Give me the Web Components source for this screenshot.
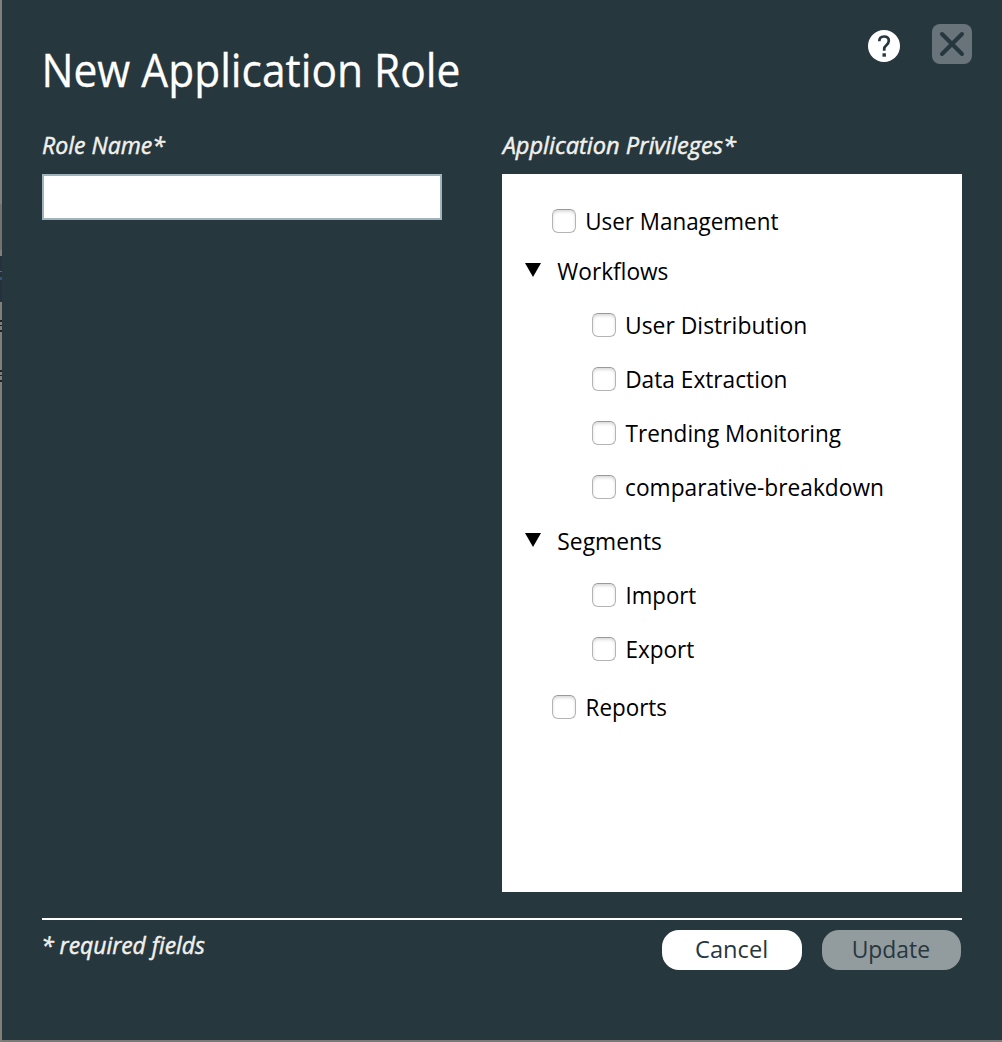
<!DOCTYPE html>
<html lang="en">
<head>
<meta charset="utf-8">
<title>New Application Role</title>
<style>
html,body{margin:0;height:100%;overflow:hidden;background:#7b7978}
body{font-family:"Open Sans","Noto Sans",sans-serif}
</style>
</head>
<body>
<role-dialog></role-dialog>
<script>
const shadow = (el, html) => { const r = el.attachShadow({mode:'open'}); r.innerHTML = html; return r; };
const pen = document.createElement('canvas').getContext('2d');

// One line of text whose glyphs run from "from" px after the box's left edge, "span" px wide.
customElements.define('fit-text', class extends HTMLElement {
  connectedCallback() {
    if (this.shadowRoot) return;
    const r = shadow(this, `<style>
      :host{display:block;white-space:nowrap;width:0}
      span{display:inline-block;transform-origin:0 50%}
    </style><span></span>`);
    const s = r.querySelector('span');
    s.textContent = this.getAttribute('text');
    const c = getComputedStyle(this);
    pen.font = `${c.fontStyle} ${c.fontWeight} ${c.fontSize} ${c.fontFamily}`;
    const m = pen.measureText(s.textContent);
    const k = this.getAttribute('span') / (m.actualBoundingBoxLeft + m.actualBoundingBoxRight);
    const x = +this.getAttribute('from') + m.actualBoundingBoxLeft * k;
    s.style.transform = `translateX(${x}px) scaleX(${k})`;
  }
});

customElements.define('help-icon', class extends HTMLElement {
  connectedCallback() {
    shadow(this, `<style>:host{display:block;width:32px;height:32px}svg{display:block}</style>
    <svg width="32" height="32" viewBox="0 0 32 32"><circle cx="16" cy="16" r="16" fill="#fff"/>
    <path d="M11.300 11.200C11.300 8 13.200 6.500 16 6.500c2.900 0 4.800 1.600 4.800 4.200 0 2.200-1.200 3.300-2.500 4.500C16.800 16.500 16.200 17.300 16.200 19v1.800" fill="none" stroke="#27373e" stroke-width="2.700"/>
    <rect x="14.500" y="23.300" width="3.400" height="3.400" fill="#27373e"/></svg>`);
  }
});

customElements.define('close-button', class extends HTMLElement {
  connectedCallback() {
    shadow(this, `<style>:host{display:block;width:40px;height:40px;border-radius:8px;background:#68737a}svg{display:block}</style>
    <svg width="40" height="40" viewBox="0 0 40 40"><path d="M10 10L30 30M30 10L10 30" stroke="#27373e" stroke-width="4" stroke-linecap="round"/></svg>`);
  }
});

customElements.define('check-row', class extends HTMLElement {
  connectedCallback() {
    shadow(this, `<style>
      :host{display:flex;align-items:center;height:54px;padding-left:50px}
      :host([nested]){padding-left:90px}
      i{box-sizing:border-box;width:24px;height:24px;border:1.5px solid #b4b4b4;border-top-color:#999;border-radius:6px;background:#fff;box-shadow:inset 0 2px 3px #00000024;flex:none}
    </style><i></i><slot></slot>`);
  }
});

customElements.define('tree-group', class extends HTMLElement {
  connectedCallback() {
    shadow(this, `<style>
      :host{display:block}
      header{display:flex;align-items:center;height:54px;padding-left:23px}
      :host([tight]) header{height:46px;padding-bottom:4px}
      svg{display:block;margin-top:-2px}
    </style><header><svg width="16" height="14" viewBox="0 0 16 14"><path d="M0 0H16L8 14Z"/></svg><slot name="label"></slot></header><slot></slot>`);
  }
});

customElements.define('pill-button', class extends HTMLElement {
  connectedCallback() {
    shadow(this, `<style>
      :host{box-sizing:border-box;display:flex;align-items:center;width:140px;height:40px;padding-bottom:2px;border-radius:17px;background:#fff;color:#27373e;line-height:38px}
      :host([disabled]){width:139px;background:#929b9e}
    </style><slot></slot>`);
  }
});

// Sliver of the page left visible beside the dialog.
customElements.define('page-edge', class extends HTMLElement {
  connectedCallback() {
    shadow(this, `<style>:host{display:block;width:2px;height:1042px;
      background:linear-gradient(#807f7d 204px,#73726f 204px 250px,#807f7d 250px 256px,#25323d 256px 271px,#6d665f 271px 272px,#25323d 272px 277px,#31567c 277px 280px,#25323d 280px 302px,#807f7a 302px 320px,#222 320px 322px,#807f7a 322px 325px,#222 325px 326px,#807f7a 326px 330px,#222 330px 332px,#807f7a 332px 370px,#222 370px 372px,#807f7a 372px 375px,#222 375px 376px,#807f7a 376px 380px,#222 380px 382px,#807f7a 382px)}</style>`);
  }
});

customElements.define('role-dialog', class extends HTMLElement {
  connectedCallback() {
    shadow(this, `<style>
      :host{display:flex;width:1002px;height:1042px;font-size:24.5px;line-height:34px;color:#000}
      main{box-sizing:border-box;width:1000px;height:1040px;background:#27373e;padding:24px 40px 0;display:flex;flex-direction:column}
      .top{display:flex;height:104px}
      .title{flex:1;font-size:46px;line-height:64px;padding-top:13px;color:#fff;-webkit-text-stroke:.3px #fff}
      help-icon{margin:6px 32px 0 0}
      close-button{margin-right:-10px}
      .cols{display:flex;gap:60px;height:764px}
      .left{width:400px}
      .right{width:460px}
      .label{height:46px;font-style:italic;line-height:34px;color:#f1f1ec;-webkit-text-stroke:.5px #f1f1ec}
      .input{box-sizing:border-box;height:46px;border:2px solid #a1b4bd;background:#fff}
      .list{box-sizing:border-box;height:718px;background:#fff;padding-top:20px}
      .last{margin-top:4px}
      footer{display:flex;margin-top:26px;border-top:2px solid #fff;padding:10px 1px 0 0;gap:20px}
      .note{flex:1;font-style:italic;color:#f1f1ec;margin-top:-2px;-webkit-text-stroke:.5px #f1f1ec}
    </style>
    <page-edge></page-edge>
    <main>
      <div class="top"><div class="title"><fit-text text="New Application Role" from="3.200" span="413.500"></fit-text></div><help-icon></help-icon><close-button></close-button></div>
      <div class="cols">
        <div class="left"><div class="label"><fit-text text="Role Name*" from="1" span="122.500"></fit-text></div><div class="input"></div></div>
        <div class="right"><div class="label"><fit-text text="Application Privileges*" from="-1.300" span="235.800"></fit-text></div>
          <div class="list">
            <check-row><fit-text text="User Management" from="11" span="191.700"></fit-text></check-row>
            <tree-group tight><fit-text slot="label" text="Workflows" from="16.300" span="110.500"></fit-text>
              <check-row nested><fit-text text="User Distribution" from="10.800" span="179.500"></fit-text></check-row>
              <check-row nested><fit-text text="Data Extraction" from="11" span="159.500"></fit-text></check-row>
              <check-row nested><fit-text text="Trending Monitoring" from="9.500" span="215.200"></fit-text></check-row>
              <check-row nested><fit-text text="comparative-breakdown" from="10" span="257"></fit-text></check-row>
            </tree-group>
            <tree-group><fit-text slot="label" text="Segments" from="17.300" span="103"></fit-text>
              <check-row nested><fit-text text="Import" from="11.300" span="69.200"></fit-text></check-row>
              <check-row nested><fit-text text="Export" from="11.300" span="67.300"></fit-text></check-row>
            </tree-group>
            <check-row class="last"><fit-text text="Reports" from="11.400" span="79"></fit-text></check-row>
          </div>
        </div>
      </div>
      <footer><div class="note"><fit-text text="* required fields" from="1" span="162.300"></fit-text></div>
        <pill-button><fit-text text="Cancel" from="34" span="71"></fit-text></pill-button>
        <pill-button disabled><fit-text text="Update" from="31.500" span="75.800"></fit-text></pill-button></footer>
    </main>`);
  }
});
</script>
</body>
</html>
